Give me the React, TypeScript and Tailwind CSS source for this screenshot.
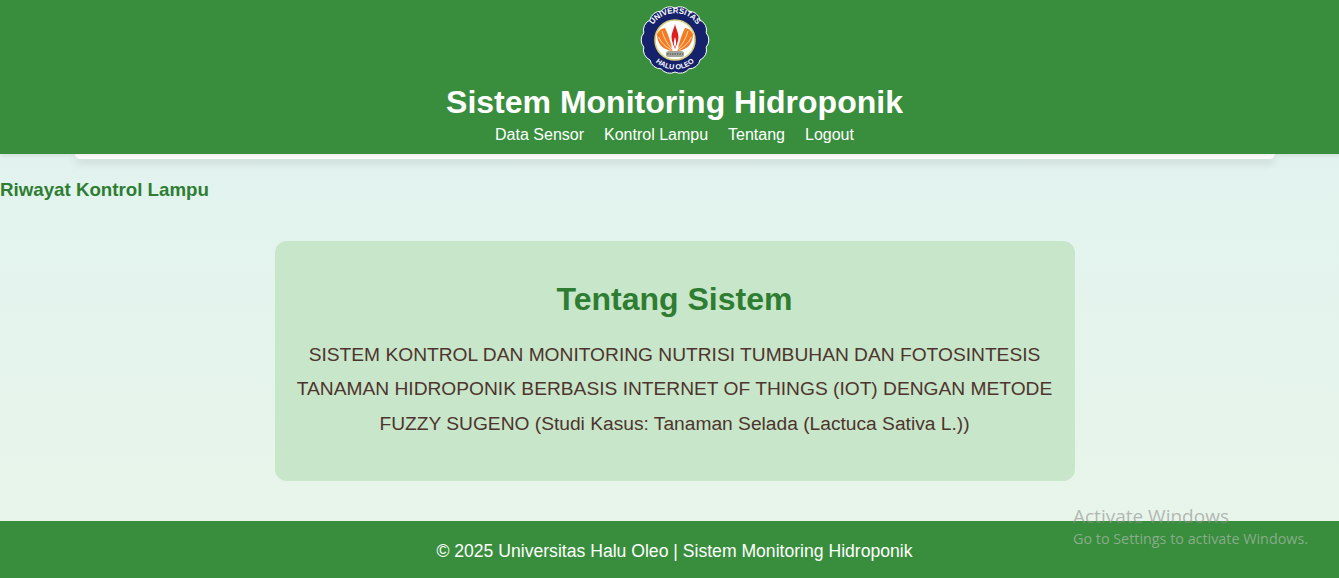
const scallop = (() => {
  const n = 14;
  const pts: string[] = [];
  for (let i = 0; i < n; i++) {
    const a = (i / n) * Math.PI * 2 - Math.PI / 2;
    const x = 36 + 32 * Math.cos(a);
    const y = 36 + 32 * Math.sin(a);
    pts.push(`${i === 0 ? "M" : "A11 11 0 0 1"}${x.toFixed(2)} ${y.toFixed(2)}`);
  }
  return pts.join(" ") + " A11 11 0 0 1 36 4z";
})();

export default function App() {
  return (
    <div className="h-[578px] w-[1339px] overflow-hidden">
      <div className="relative flex h-[578px] w-[1349px] flex-col bg-gradient-to-b from-[#e0f2f1] to-[#e8f5e9] font-['Liberation_Sans',Arial,sans-serif]">
        <header className="relative z-10 flex h-[154px] shrink-0 flex-col items-center bg-[#388e3c] text-white shadow-[0_2px_4px_rgba(0,0,0,0.08)]">
          <svg viewBox="0 0 72 72" className="mt-[4px] h-[72px] w-[72px]">
            <path d={scallop} fill="#15216b" stroke="#fff" strokeWidth="1" />
            <circle cx="36" cy="36" r="20" fill="#fff" stroke="#d8cf7a" strokeWidth="1.600" />
            <path d="M33.500 47C24 46 18 40 18 30c2-4 5-6 8-6 3 6 6 14 7.500 23z" fill="#f47b20" />
            <path d="M38.500 47C48 46 54 40 54 30c-2-4-5-6-8-6-3 6-6 14-7.500 23z" fill="#f47b20" />
            <path d="M19.500 33c3 6 7 10 13 13M23 27c2 7 5 13 10 18M52.500 33c-3 6-7 10-13 13M49 27c-2 7-5 13-10 18" fill="none" stroke="#fff" strokeWidth="0.700" />
            <path d="M36 20c.8 5 4.200 9 3.300 15-.5 4-2.300 7-3.300 10-1-3-2.800-6-3.300-10-.9-6 2.500-10 3.300-15z" fill="#e11d24" />
            <path d="M36 33c.8 3 1.500 5 1 7.500l-1 3.500-1-3.500c-.5-2.500.2-4.500 1-7.500z" fill="#fff" />
            <rect x="27" y="47" width="18" height="6" rx="2.500" fill="#a3a39b" />
            <path d="M28 50h16" stroke="#33333a" strokeWidth="0.800" strokeDasharray="1.500 1" />
            <path id="logoTop" d="M9.500 40A26.800 26.800 0 1 1 62.500 40" fill="none" />
            <path id="logoBottom" d="M9 46A28.500 28.500 0 0 0 63 46" fill="none" />
            <text fill="#fff" fontSize="7.800" fontWeight="700" fontFamily="Liberation Sans, sans-serif">
              <textPath href="#logoTop" startOffset="50%" textAnchor="middle">UNIVERSITAS</textPath>
            </text>
            <text fill="#fff" fontSize="7.200" fontWeight="700" fontFamily="Liberation Sans, sans-serif">
              <textPath href="#logoBottom" startOffset="50%" textAnchor="middle">HALU OLEO</textPath>
            </text>
          </svg>
          <h1 className="mt-[8px] text-[32px] leading-[37px] font-bold">Sistem Monitoring Hidroponik</h1>
          <nav className="mt-[4px] flex gap-5 text-base leading-[20px]">
            <span>Data Sensor</span>
            <span>Kontrol Lampu</span>
            <span>Tentang</span>
            <span>Logout</span>
          </nav>
        </header>
        <div className="mx-auto h-[5px] w-[1200px] shrink-0 rounded-b-xl bg-white shadow-[0_4px_8px_rgba(0,0,0,0.14)]" />
        <h2 className="mt-[20px] text-[18.720px] leading-[22px] font-bold text-[#2e7d32]">Riwayat Kontrol Lampu</h2>
        <section className="mx-auto mt-[40px] flex h-[240px] w-[800px] shrink-0 flex-col items-center rounded-xl bg-[#c8e6c9] px-5 pt-[40px] text-center">
          <h2 className="text-[32px] leading-[37px] font-bold text-[#2e7d32]">Tentang Sistem</h2>
          <p className="mt-[19.700px] text-[19.200px] leading-[34.560px] text-[#4e342e]">
            SISTEM KONTROL DAN MONITORING NUTRISI TUMBUHAN DAN FOTOSINTESIS TANAMAN HIDROPONIK BERBASIS INTERNET OF THINGS (IOT) DENGAN METODE FUZZY SUGENO (Studi Kasus: Tanaman Selada (Lactuca Sativa L.))
          </p>
        </section>
        <footer className="mt-auto flex h-[57px] shrink-0 items-center justify-center bg-[#388e3c] pt-[3px] text-[17.600px] text-white">
          © 2025 Universitas Halu Oleo | Sistem Monitoring Hidroponik
        </footer>
        <div className="absolute top-[503px] left-[1073px] font-['Open_Sans',sans-serif] whitespace-nowrap">
          <div className="text-[19px] leading-[26px] text-[#8d8d8d]/60">Activate Windows</div>
          <div className="mt-[1px] text-[14.350px] leading-[18px] text-[#c0c0c0]/60">Go to Settings to activate Windows.</div>
        </div>
      </div>
    </div>
  );
}
